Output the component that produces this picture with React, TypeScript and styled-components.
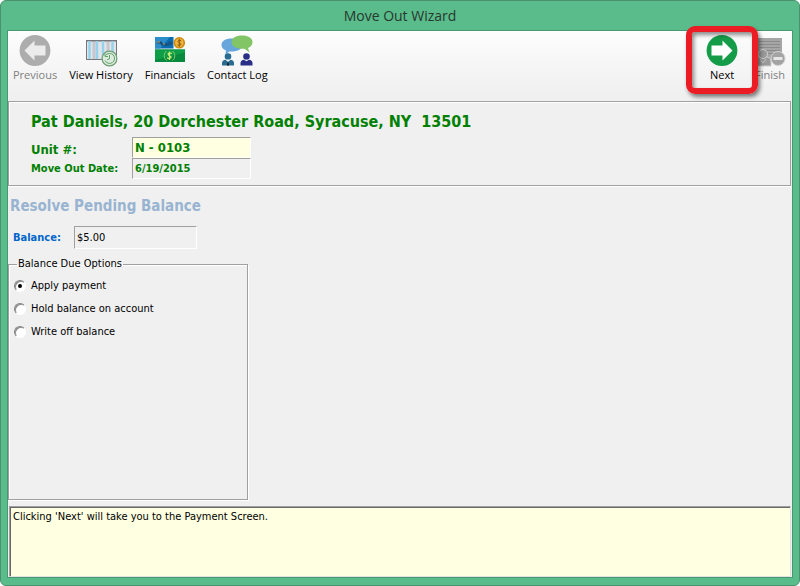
import React, { useState } from "react";
import styled, { createGlobalStyle } from "styled-components";

const ui = `"Open Sans", "Noto Sans", sans-serif`;
const tahoma = `"DejaVu Sans Condensed", "DejaVu Sans", sans-serif`;

const GlobalStyle = createGlobalStyle`
  * { box-sizing: border-box; }
  body { margin: 0; background: #fff; font-family: ${tahoma}; font-size: 11px; color: #000; }
`;

const Window = styled.div`
  display: flex;
  flex-direction: column;
  min-height: 100vh;
  padding: 0 6px 7px;
  background: #5bbc8b;
  border: 1px solid #48936e;
  border-radius: 6px;
`;

const TitleBar = styled.h1`
  margin: 0;
  height: 29px;
  text-align: center;
  font: 400 14px/29px ${ui};
  color: #26382f;
`;

const Client = styled.main`
  flex: 1;
  display: flex;
  flex-direction: column;
  background: #f0f0f0;
  border: 1px solid #459a70;
`;

const Toolbar = styled.nav`
  display: flex;
  align-items: flex-start;
  justify-content: space-between;
  height: 70px;
  padding: 4px 6px 0 5px;
  background: linear-gradient(#fdfdfd, #f0f0f0 90%);
`;

const ToolGroup = styled.div`
  display: flex;
  gap: 12px;
`;

const StepGroup = styled(ToolGroup)`
  gap: 16px;
`;

const ToolButton = styled.button`
  position: relative;
  display: flex;
  flex-direction: column;
  align-items: center;
  padding: 0;
  border: 0;
  background: none;
  font: 400 11px/16px ${ui};
  color: #000;
  white-space: nowrap;
  &:disabled { color: #808080; }
  svg { display: block; }
`;

const Highlight = styled.span`
  position: absolute;
  z-index: 1;
  inset: -9px -20px -11px;
  border: 6px solid #ec1c24;
  border-radius: 9px;
  box-shadow: 2px 3px 4px rgba(0, 0, 0, 0.5), inset 2px 3px 4px rgba(0, 0, 0, 0.45);
  pointer-events: none;
`;

const Summary = styled.section`
  margin-right: 1px;
  padding: 9px 22px 6px;
  border: 1px solid #a0a0a0;
  box-shadow: inset 1px 1px 0 #fff, 0 1px 0 #fff;
  color: #008000;
`;

const Tenant = styled.h2`
  margin: 0 0 4px;
  font: 700 16px/22px ${tahoma};
  white-space: pre;
`;

const Fields = styled.div`
  display: grid;
  grid-template-columns: 101px 119px;
  align-items: center;
`;

const FieldLabel = styled.label<{ $large?: boolean }>`
  font-weight: 700;
  font-size: ${(p) => (p.$large ? 13 : 11)}px;
  padding-top: ${(p) => (p.$large ? 3 : 0)}px;
`;

const Sunken = styled.input`
  min-width: 0;
  width: 100%;
  height: 21px;
  padding: 0 2px;
  border: 1px solid;
  border-color: #a0a0a0 #fff #fff #a0a0a0;
  border-radius: 0;
  outline: 0;
  background: #f0f0f0;
  font: 400 11px/18px ${tahoma};
  color: #000;
`;

const UnitField = styled(Sunken)`
  background: #ffffe1;
  font-weight: 700;
  font-size: 13px;
  color: #008000;
`;

const DateField = styled(Sunken)`
  font-weight: 700;
  color: #008000;
`;

const Body = styled.section`
  flex: 1;
  display: flex;
  flex-direction: column;
  align-items: flex-start;
  padding-top: 10px;
`;

const Heading = styled.h3`
  margin: 0 2px 10px;
  font: 700 15px/20px ${tahoma};
  color: #99b4d1;
`;

const BalanceRow = styled.div`
  display: grid;
  grid-template-columns: 61px 123px;
  align-items: center;
  padding-left: 5px;
  margin-bottom: 8px;
`;

const BalanceLabel = styled.label`
  font-weight: 700;
  color: #0066cc;
`;

const BalanceField = styled(Sunken)`
  height: 23px;
`;

const Options = styled.fieldset`
  flex: 1;
  width: 240px;
  margin: 0 0 6px;
  padding: 3px 5px;
  border: 1px solid #a0a0a0;
  box-shadow: inset 1px 1px 0 #fff, 1px 1px 0 #fff;
`;

const Legend = styled.legend`
  margin-left: 3px;
  padding: 0 1px;
  line-height: 14px;
`;

const Option = styled.label`
  display: flex;
  align-items: center;
  gap: 5px;
  height: 23px;
`;

const Radio = styled.input`
  appearance: none;
  flex: none;
  display: grid;
  place-items: center;
  width: 12px;
  height: 12px;
  margin: 0;
  border: 1px solid;
  border-color: #808080 #fff #fff #808080;
  border-radius: 50%;
  background: #fff;
  box-shadow: inset 1px 1px 0 #8a8a8a;
  &:checked::before {
    content: "";
    width: 4px;
    height: 4px;
    border-radius: 50%;
    background: #000;
  }
`;

const Hint = styled.output`
  display: block;
  height: 71px;
  margin: 0 1px;
  padding: 2px 3px;
  border: 1px solid;
  border-color: #a0a0a0 #e3e3e3 #e3e3e3 #a0a0a0;
  box-shadow: inset 1px 1px 0 #696969;
  background: #ffffe1;
  line-height: 16px;
`;

const ArrowIcon = ({ left, color, fill }: { left?: boolean; color: string; fill: string }) => (
  <svg width="32" height="32" viewBox="0 0 32 32">
    <circle cx="16" cy="15.5" r="15.4" fill={color} />
    <path
      d={left ? "M5.5 15.5 15.5 5.5v5H26.5v10H15.5v5Z" : "M26.5 15.5 16.5 5.500v5H5.500v10h11v5Z"}
      fill={fill}
    />
  </svg>
);

const HistoryIcon = () => (
  <svg width="34" height="32" viewBox="0 0 34 32">
    <rect x="2.5" y="5.5" width="30" height="19" fill="#e4e4e7" stroke="#77777b" />
    <path d="M10 7v17M24 7v17" stroke="#c6c6cc" strokeWidth="3" />
    <path d="M3 6.500h29" stroke="#a9a9ad" />
    <path d="M5.500 6v18M13 6v18M19 6v18M28.500 6v18" stroke="#93d3ee" strokeWidth="2.500" />
    <circle cx="25.500" cy="23.500" r="7.400" fill="#dfeade" stroke="#6d9e73" strokeWidth="1.200" />
    <path d="M21.500 20.500a5 5 0 1 1-.5 5M21 18.500v3h3M25.500 20v3.800l-2.500 1" fill="none" stroke="#5ba567" />
  </svg>
);

const FinancialsIcon = () => (
  <svg width="32" height="32" viewBox="0 0 32 32">
    <rect x="1" y="2" width="18.500" height="11.500" fill="#0b6cb0" />
    <path d="M1 2h15L6 13.500H1Z" fill="#2c8dc9" />
    <path d="M3 7.500h4l1 2h7" fill="none" stroke="#174b78" strokeWidth="2" />
    <path d="M3 7h3M9 9h2" stroke="#c9a25a" />
    <rect x="14" y="6.500" width="4" height="3.500" fill="#13548b" />
    <circle cx="25.300" cy="7.800" r="5.800" fill="#cf8a14" />
    <circle cx="25.300" cy="7.800" r="4.200" fill="#f0b53c" />
    <path d="M27.200 6c-3-1.800-4.500.8-2 1.800s2.500 3.400-1.800 2M25.300 3.800v8" fill="none" stroke="#8f560b" />
    <rect x="1" y="14.500" width="30" height="12.500" fill="#078a3d" />
    <path d="M1 14.500h30v3L1 25Z" fill="#0f9e48" />
    <path d="M12.500 16a6 6 0 0 0 0 9.500M18.500 16a6 6 0 0 1 0 9.500" fill="none" stroke="#7cc96a" />
    <path d="M18 18.600c-3-2-5.400.5-2.500 2.100 3.500 1.300.8 3.900-2.500 2.200M15.500 16.500v8.500" fill="none" stroke="#c8eb75" strokeWidth="1.200" />
  </svg>
);

const ContactIcon = () => (
  <svg width="34" height="32" viewBox="0 0 34 32">
    <path d="M11.5 3.500c6.500 0 11 2.500 11 6.500s-4.500 6.500-11 6.500l-2 0-4 3 .5-4C3 14.200 1.500 12.500 1.500 10c0-4 4-6.500 10-6.500Z" fill="#66a6dc" />
    <path d="M22 0.500c6 0 10.500 2.500 10.500 6.500 0 3-1.700 5-4.500 6l1.500 4.500-5-3.700c-8 .4-13-2.300-13-6.800C11.500 3 16 .5 22 .5Z" fill="#82c566" />
    <circle cx="8" cy="21.500" r="3.300" fill="#286d91" />
    <path d="M2 30.500v-2.500c0-2 1.500-3 3.500-3.300l2.500 2 2.500-2c2 .3 3.500 1.300 3.500 3.300v2.500Z" fill="#286d91" />
    <path d="M6.300 24.700h3.400L8 27Z" fill="#e6f4fb" />
    <path d="m8 26 1 4.500H7Z" fill="#111" />
    <circle cx="26.500" cy="21.500" r="3.300" fill="#292f86" />
    <path d="M20.500 30.500v-2.500c0-2 1.500-3 3.500-3.300l2.500 1.500 2.500-1.500c2 .3 3.500 1.300 3.500 3.300v2.500Z" fill="#292f86" />
  </svg>
);

const FinishIcon = () => (
  <svg width="32" height="32" viewBox="0 0 32 32">
    <rect x="3" y="3" width="25" height="21" fill="#a6a6a6" />
    <path d="M5 6.500h21M5 9.500h21M5 12.500h21M5 15.500h21M5 18.500h21" stroke="#8b8b8b" />
    <path d="M1 31v-4c0-3 2-4.500 4-5h8c3 .5 4 2 4 5v4Z" fill="#9a9a9a" stroke="#cfcfcf" />
    <circle cx="9" cy="19" r="4.500" fill="#9a9a9a" stroke="#cfcfcf" />
    <path d="m6 24 3 4 3-4" fill="none" stroke="#c4c4c4" />
    <circle cx="24" cy="23.500" r="7" fill="#a3a3a3" stroke="#d2d2d2" />
    <path d="M19.500 23.500h9" stroke="#e6e6e6" strokeWidth="3" />
  </svg>
);

const choices = ["Apply payment", "Hold balance on account", "Write off balance"];

export default function App() {
  const [choice, setChoice] = useState(choices[0]);
  return (
    <>
      <GlobalStyle />
      <Window>
        <TitleBar>Move Out Wizard</TitleBar>
        <Client>
          <Toolbar aria-label="Wizard">
            <ToolGroup>
              <ToolButton disabled><ArrowIcon left color="#adadad" fill="#ececec" />Previous</ToolButton>
              <ToolButton><HistoryIcon />View History</ToolButton>
              <ToolButton><FinancialsIcon />Financials</ToolButton>
              <ToolButton><ContactIcon />Contact Log</ToolButton>
            </ToolGroup>
            <StepGroup>
              <ToolButton><ArrowIcon color="#149c49" fill="#fff" />Next<Highlight /></ToolButton>
              <ToolButton disabled><FinishIcon />Finish</ToolButton>
            </StepGroup>
          </Toolbar>
          <Summary>
            <Tenant>{"Pat Daniels, 20 Dorchester Road, Syracuse, NY  13501"}</Tenant>
            <Fields>
              <FieldLabel htmlFor="unit" $large>Unit #:</FieldLabel>
              <UnitField id="unit" readOnly value="N - 0103" />
              <FieldLabel htmlFor="date">Move Out Date:</FieldLabel>
              <DateField id="date" readOnly value="6/19/2015" />
            </Fields>
          </Summary>
          <Body>
            <Heading>Resolve Pending Balance</Heading>
            <BalanceRow>
              <BalanceLabel htmlFor="balance">Balance:</BalanceLabel>
              <BalanceField id="balance" readOnly value="$5.00" />
            </BalanceRow>
            <Options>
              <Legend>Balance Due Options</Legend>
              {choices.map((c) => (
                <Option key={c}>
                  <Radio type="radio" name="balance-option" checked={choice === c} onChange={() => setChoice(c)} />
                  {c}
                </Option>
              ))}
            </Options>
          </Body>
          <Hint>Clicking 'Next' will take you to the Payment Screen.</Hint>
        </Client>
      </Window>
    </>
  );
}
